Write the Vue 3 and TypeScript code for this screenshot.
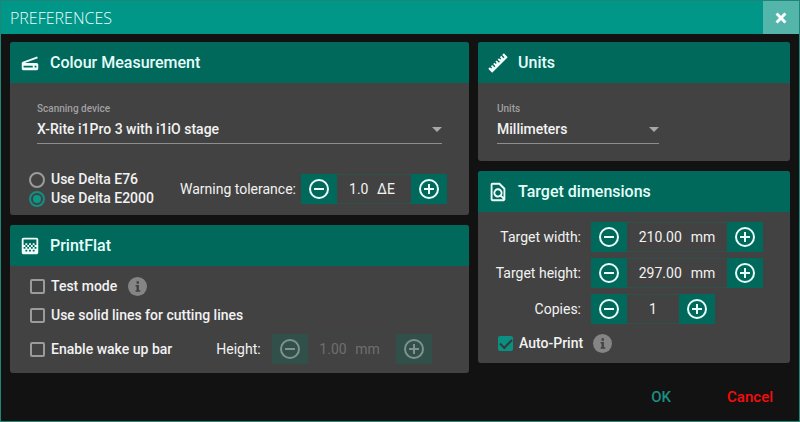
<script setup lang="ts">
import { reactive, ref } from 'vue'

interface Quantity {
  id: string
  label: string
  value: string
  unit: string
  step: number
  decimals: number
  disabled?: boolean
}

const device = ref('X-Rite i1Pro 3 with i1iO stage')
const units = ref('Millimeters')
const deltaMode = ref('E2000')
const testMode = ref(false)
const solidLines = ref(false)
const wakeUpBar = ref(false)
const autoPrint = ref(true)

const tolerance = reactive<Quantity>({ id: 'tolerance', label: 'Warning tolerance:', value: '1.0', unit: 'ΔE', step: 0.1, decimals: 1 })
const barHeight = reactive<Quantity>({ id: 'bar', label: 'Height:', value: '1.00', unit: 'mm', step: 0.5, decimals: 2, disabled: true })
const targets = reactive<Quantity[]>([
  { id: 'width', label: 'Target width:', value: '210.00', unit: 'mm', step: 1, decimals: 2 },
  { id: 'height', label: 'Target height:', value: '297.00', unit: 'mm', step: 1, decimals: 2 },
  { id: 'copies', label: 'Copies:', value: '1', unit: '', step: 1, decimals: 0 },
])

function change(q: Quantity, direction: number) {
  q.value = Math.max(0, Number(q.value) + direction * q.step).toFixed(q.decimals)
}

// Digits are 8px wide and the decimal point 4px at the field's text size.
function valueWidth(value: string) {
  return [...value].reduce((sum, c) => sum + (c === '.' ? 4 : 8), 0) + 'px'
}
</script>

<template>
  <main class="window">
    <header class="titlebar">
      <h1>PREFERENCES</h1>
      <button class="close" type="button" aria-label="Close">
        <svg viewBox="0 0 12 12"><path d="M2.2 2.2l7.6 7.6M9.8 2.2L2.2 9.8" /></svg>
      </button>
    </header>

    <div class="columns">
      <div class="column">
        <section class="card">
          <h2>
            <svg class="icon" viewBox="0 0 24 24"><path d="M4.2 10.7L19.8 5l.7 1.9L6.4 12H19c1.1 0 2 .9 2 2v4c0 1.100-.9 2-2 2H5c-1.100 0-2-.9-2-2v-5.500c0-.8.500-1.600 1.200-1.800zM17 17h2v-2h-2v2zM5 17h10v-2H5v2z" /></svg>
            Colour Measurement
          </h2>
          <div class="measure">
            <div class="field wide">
              <label for="device">Scanning device</label>
              <div class="select">
                <select id="device" v-model="device"><option>X-Rite i1Pro 3 with i1iO stage</option></select>
                <svg viewBox="0 0 10 5"><path d="M0 0h10L5 5z" /></svg>
              </div>
            </div>
            <div class="row tolerance">
              <div class="radios">
                <label><input v-model="deltaMode" type="radio" name="delta" value="E76" />Use Delta E76</label>
                <label><input v-model="deltaMode" type="radio" name="delta" value="E2000" />Use Delta E2000</label>
              </div>
              <label class="name" :for="tolerance.id">{{ tolerance.label }}</label>
              <div class="stepper medium">
                <button type="button" aria-label="Decrease tolerance" @click="change(tolerance, -1)">
                  <svg viewBox="0 0 22 22"><circle cx="11" cy="11" r="9" /><path d="M6 11h10" /></svg>
                </button>
                <span class="value"><input :id="tolerance.id" v-model="tolerance.value" :style="{ width: valueWidth(tolerance.value) }" />{{ tolerance.unit }}</span>
                <button type="button" aria-label="Increase tolerance" @click="change(tolerance, 1)">
                  <svg viewBox="0 0 22 22"><circle cx="11" cy="11" r="9" /><path d="M6 11h10M11 6v10" /></svg>
                </button>
              </div>
            </div>
          </div>
        </section>

        <section class="card">
          <h2>
            <svg class="icon" viewBox="0 0 24 24"><path d="M11 9h2v2h-2zM9 11h2v2H9zM13 11h2v2h-2zM15 9h2v2h-2zM7 9h2v2H7zM19 3H5c-1.100 0-2 .9-2 2v14c0 1.100.9 2 2 2h14c1.100 0 2-.9 2-2V5c0-1.100-.9-2-2-2zM9 18H7v-2h2v2zm4 0h-2v-2h2v2zm4 0h-2v-2h2v2zm2-7h-2v2h2v2h-2v-2h-2v2h-2v-2h-2v2H9v-2H7v2H5v-2h2v-2H5V5h14v6z" /></svg>
            PrintFlat
          </h2>
          <div class="printflat">
            <div class="row option">
              <label class="check"><input v-model="testMode" type="checkbox" />Test mode</label>
              <svg class="info" viewBox="0 0 20 20"><circle cx="10" cy="10" r="10" /><path d="M9 4.500h2.500v2.500H9zM8 8.500h3.500V14H13v1.500H8V14h1v-4H8z" /></svg>
            </div>
            <div class="row option">
              <label class="check"><input v-model="solidLines" type="checkbox" />Use solid lines for cutting lines</label>
            </div>
            <div class="row wake">
              <label class="check"><input v-model="wakeUpBar" type="checkbox" />Enable wake up bar</label>
              <label class="name" :for="barHeight.id">{{ barHeight.label }}</label>
              <div class="stepper large disabled">
                <button type="button" aria-label="Decrease height" disabled>
                  <svg viewBox="0 0 22 22"><circle cx="11" cy="11" r="9" /><path d="M6 11h10" /></svg>
                </button>
                <span class="value"><input :id="barHeight.id" v-model="barHeight.value" disabled :style="{ width: valueWidth(barHeight.value) }" />{{ barHeight.unit }}</span>
                <button type="button" aria-label="Increase height" disabled>
                  <svg viewBox="0 0 22 22"><circle cx="11" cy="11" r="9" /><path d="M6 11h10M11 6v10" /></svg>
                </button>
              </div>
            </div>
          </div>
        </section>
      </div>

      <div class="column">
        <section class="card">
          <h2>
            <svg class="icon" viewBox="0 0 24 24"><path d="M1.390 18.360L3.160 16.600 4.580 18l1.060-1.050-1.420-1.410 1.420-1.420 2.470 2.480 1.060-1.060-2.470-2.480 1.410-1.410 1.420 1.410L10.590 12 9.170 10.590l1.420-1.420 2.470 2.480 1.060-1.060-2.470-2.480 1.410-1.410 1.410 1.410 1.070-1.060-1.420-1.410 1.420-1.420L18 6.700l1.070-1.060-2.470-2.480 1.760-1.770 4.250 4.250L5.640 22.610z" /></svg>
            Units
          </h2>
          <div class="units">
            <div class="field">
              <label for="units">Units</label>
              <div class="select">
                <select id="units" v-model="units"><option>Millimeters</option></select>
                <svg viewBox="0 0 10 5"><path d="M0 0h10L5 5z" /></svg>
              </div>
            </div>
          </div>
        </section>

        <section class="card">
          <h2>
            <svg class="icon" viewBox="0 0 24 24"><path d="M20 8l-6-6H6c-1.100 0-1.990.9-1.990 2L4 20c0 1.100.89 2 1.990 2H18c1.100 0 2-.9 2-2V8zM6 4h7l5 5v8.580l-1.840-1.840c1.280-1.940 1.070-4.570-.64-6.280C14.550 8.490 13.280 8 12 8c-1.280 0-2.550.49-3.530 1.460-1.950 1.950-1.950 5.110 0 7.050.97.97 2.250 1.460 3.530 1.460.96 0 1.920-.28 2.750-.83L17.600 20H6V4zm8.110 11.100c-.56.56-1.310.88-2.110.88s-1.550-.31-2.110-.88c-.56-.56-.88-1.310-.88-2.110s.31-1.550.88-2.110c.56-.57 1.310-.88 2.110-.88s1.550.31 2.110.88c.56.56.88 1.310.88 2.110s-.31 1.550-.88 2.110z" /></svg>
            Target dimensions
          </h2>
          <div class="targets">
            <div v-for="q in targets" :key="q.id" class="row target">
              <label class="name" :for="q.id">{{ q.label }}</label>
              <div class="stepper" :class="q.unit ? 'full' : 'small'">
                <button type="button" :aria-label="'Decrease ' + q.id" @click="change(q, -1)">
                  <svg viewBox="0 0 22 22"><circle cx="11" cy="11" r="9" /><path d="M6 11h10" /></svg>
                </button>
                <span class="value"><input :id="q.id" v-model="q.value" :style="{ width: valueWidth(q.value) }" /><template v-if="q.unit">{{ q.unit }}</template></span>
                <button type="button" :aria-label="'Increase ' + q.id" @click="change(q, 1)">
                  <svg viewBox="0 0 22 22"><circle cx="11" cy="11" r="9" /><path d="M6 11h10M11 6v10" /></svg>
                </button>
              </div>
            </div>
            <div class="row option auto">
              <label class="check"><input v-model="autoPrint" type="checkbox" />Auto-Print</label>
              <svg class="info" viewBox="0 0 20 20"><circle cx="10" cy="10" r="10" /><path d="M9 4.500h2.500v2.500H9zM8 8.500h3.500V14H13v1.500H8V14h1v-4H8z" /></svg>
            </div>
          </div>
        </section>
      </div>
    </div>

    <footer>
      <button class="ok" type="button">OK</button>
      <button class="cancel" type="button">Cancel</button>
    </footer>
  </main>
</template>

<style>
body {
  background: #121212;
}
</style>

<style scoped>
* {
  box-sizing: border-box;
}
.window {
  display: flex;
  flex-direction: column;
  min-height: 100vh;
  border: 1px solid #1f8578;
  background: #121212;
  color: #f2f2f2;
  font: 500 14px/20px Roboto, sans-serif;
}
button,
input,
select {
  font: inherit;
  color: inherit;
  margin: 0;
  padding: 0;
  border: 0;
  border-radius: 0;
  background: none;
}
.titlebar {
  display: flex;
  align-items: stretch;
  justify-content: space-between;
  height: 33px;
  background: #009688;
}
h1 {
  margin: 0;
  padding-left: 9px;
  font: 300 16px/34px "Open Sans", "Noto Sans", sans-serif;
  color: #edfffc;
}
.close {
  display: grid;
  place-items: center;
  width: 36px;
  background: #54b5ab;
}
.close svg {
  width: 14px;
  height: 14px;
  stroke: #fff;
  stroke-width: 2.500;
}
.columns {
  display: grid;
  grid-template-columns: 459fr 312fr;
  align-items: start;
  gap: 9px;
  padding: 8px 9px 0;
}
.column {
  display: flex;
  flex-direction: column;
  gap: 10px;
}
.card {
  border-radius: 3px;
  background: #424242;
  overflow: hidden;
}
h2 {
  display: flex;
  align-items: center;
  gap: 9px;
  height: 41px;
  margin: 0;
  padding: 0 9px;
  background: #00695c;
  color: #e4fffa;
  font-size: 16px;
  font-weight: 500;
}
.icon {
  width: 22px;
  height: 22px;
  fill: #f0fffc;
}
.measure {
  padding: 18px 19px 7px;
}
.units {
  padding: 18px 19px 17px;
}
.field {
  display: flex;
  flex-direction: column;
  width: 162px;
}
.field.wide {
  width: auto;
  margin: 0 8px;
}
.field label {
  font-size: 10px;
  font-weight: 500;
  line-height: 16px;
  color: #a0a0a0;
}
.select {
  display: grid;
  align-items: center;
  height: 27px;
  padding-bottom: 2px;
  border-bottom: 1px solid #8e8e8e;
}
.select select,
.select svg {
  grid-area: 1 / 1;
}
.select select {
  appearance: none;
  outline: none;
}
.select svg {
  justify-self: end;
  width: 10px;
  height: 5px;
  fill: #a8a8a8;
  pointer-events: none;
}
.row {
  display: flex;
  align-items: center;
}
.tolerance {
  margin-top: 26px;
}
.radios {
  margin-right: 26px;
}
.radios label,
.check {
  display: flex;
  align-items: center;
  gap: 6px;
  line-height: 19px;
}
.radios input,
.check input {
  appearance: none;
  display: grid;
  place-items: center;
  flex: none;
  border: 2px solid #9b9b9b;
}
.radios input {
  width: 16px;
  height: 16px;
  border-radius: 50%;
}
.radios input:checked {
  border-color: #109082;
}
.radios input:checked::before {
  content: "";
  width: 8px;
  height: 8px;
  border-radius: 50%;
  background: #0a9888;
}
.check input {
  width: 15px;
  height: 15px;
  border-radius: 2px;
}
.check input:checked {
  border-color: #0a9082;
  background: #0a9082;
}
.check input:checked::before {
  content: "";
  width: 10px;
  height: 5px;
  border: solid #303c3a;
  border-width: 0 0 2px 2px;
  transform: translateY(-1px) rotate(-45deg);
}
.name {
  font-weight: 400;
}
.stepper {
  display: flex;
  height: 30px;
  margin-left: 5px;
}
.stepper.small {
  width: 124px;
}
.stepper.medium {
  width: 146px;
}
.stepper.large {
  width: 160px;
}
.stepper.full {
  width: 172px;
}
.stepper button {
  display: grid;
  place-items: center;
  flex: none;
  width: 36px;
  background: #00695c;
}
.stepper svg {
  width: 22px;
  height: 22px;
  fill: none;
  stroke: #e8fffb;
  stroke-width: 2;
}
.value {
  display: flex;
  flex: 1;
  align-items: center;
  justify-content: center;
  gap: 8px;
  border: solid #305148;
  border-width: 1px 0;
  font-weight: 400;
}
.medium .value,
.large .value {
  padding-right: 4px;
}
.value input {
  outline: none;
}
.stepper.disabled button {
  background: #315049;
}
.stepper.disabled svg {
  stroke: #82918e;
}
.stepper.disabled .value {
  border-color: #3e4644;
  color: #6f6f6f;
}
.printflat {
  display: flex;
  flex-direction: column;
  gap: 9px;
  padding: 10px 19px 9px;
}
.option {
  gap: 11px;
  height: 20px;
}
.check {
  padding-left: 1px;
}
.info {
  width: 19px;
  height: 19px;
  fill: #858585;
}
.info path {
  fill: #424242;
}
.wake .name {
  margin-left: 44px;
}
.wake .stepper {
  margin-left: 11px;
}
.targets {
  display: flex;
  flex-direction: column;
  gap: 6px;
  padding: 10px 19px 10px 0;
}
.target .name {
  width: 103px;
  text-align: right;
}
.target .stepper {
  margin-left: 10px;
}
.auto {
  margin-top: 3px;
  padding-left: 19px;
}
.auto .info {
  margin-left: -1px;
}
footer {
  display: flex;
  flex: 1;
  align-items: center;
  justify-content: flex-end;
  gap: 56px;
  min-height: 48px;
  padding-right: 26px;
}
footer button {
  font-size: 15px;
}
.ok {
  color: #1b8f80;
}
.cancel {
  color: #f80c0c;
}
</style>
